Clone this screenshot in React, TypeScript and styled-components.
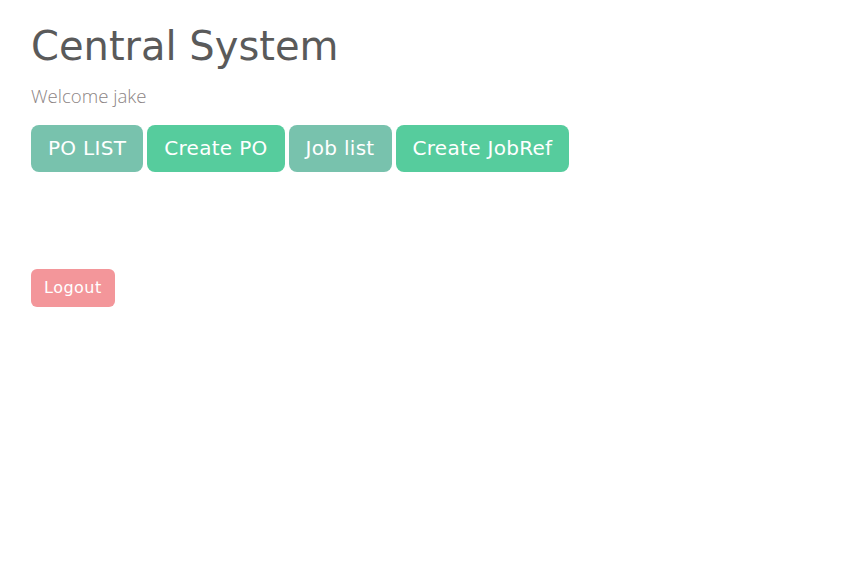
import styled, { createGlobalStyle } from "styled-components";

const GlobalStyle = createGlobalStyle`
  body {
    margin: 0;
    background: #fff;
    font-family: "DejaVu Sans", "Noto Sans", sans-serif;
  }
`;

const Page = styled.div`
  padding: 22px 31px;
`;

const Title = styled.h1`
  margin: 0;
  font-family: "DejaVu Sans", sans-serif;
  font-weight: 400;
  font-size: 40px;
  line-height: 48px;
  color: #5a5a5a;
`;

const Welcome = styled.p`
  margin: 12px 0 16px;
  font-family: "Open Sans", sans-serif;
  font-weight: 300;
  font-size: 18.6px;
  line-height: 27px;
  color: #8c8484;
`;

const Nav = styled.div`
  display: flex;
  gap: 4px;
`;

const Button = styled.button<{ $variant: "primary" | "success" | "danger"; $large?: boolean }>`
  border: 1px solid transparent;
  border-radius: ${(p) => (p.$large ? "8px" : "6px")};
  font-family: "DejaVu Sans", sans-serif;
  font-size: ${(p) => (p.$large ? "20px" : "16px")};
  letter-spacing: ${(p) => (p.$large ? "0.3px" : "0.5px")};
  line-height: ${(p) => (p.$large ? "29px" : "24px")};
  padding: ${(p) => (p.$large ? "8px 16px" : "6px 12px")};
  color: #fff;
  cursor: pointer;
  background: ${(p) =>
    p.$variant === "primary" ? "#78c2ad" : p.$variant === "success" ? "#56cc9d" : "#f3969a"};
`;

const Footer = styled.div`
  margin-top: 97px;
`;

export default function App() {
  return (
    <>
      <GlobalStyle />
      <Page>
        <Title>Central System</Title>
        <Welcome>Welcome jake</Welcome>
        <Nav>
          <Button $variant="primary" $large>PO LIST</Button>
          <Button $variant="success" $large>Create PO</Button>
          <Button $variant="primary" $large>Job list</Button>
          <Button $variant="success" $large>Create JobRef</Button>
        </Nav>
        <Footer>
          <Button $variant="danger">Logout</Button>
        </Footer>
      </Page>
    </>
  );
}
